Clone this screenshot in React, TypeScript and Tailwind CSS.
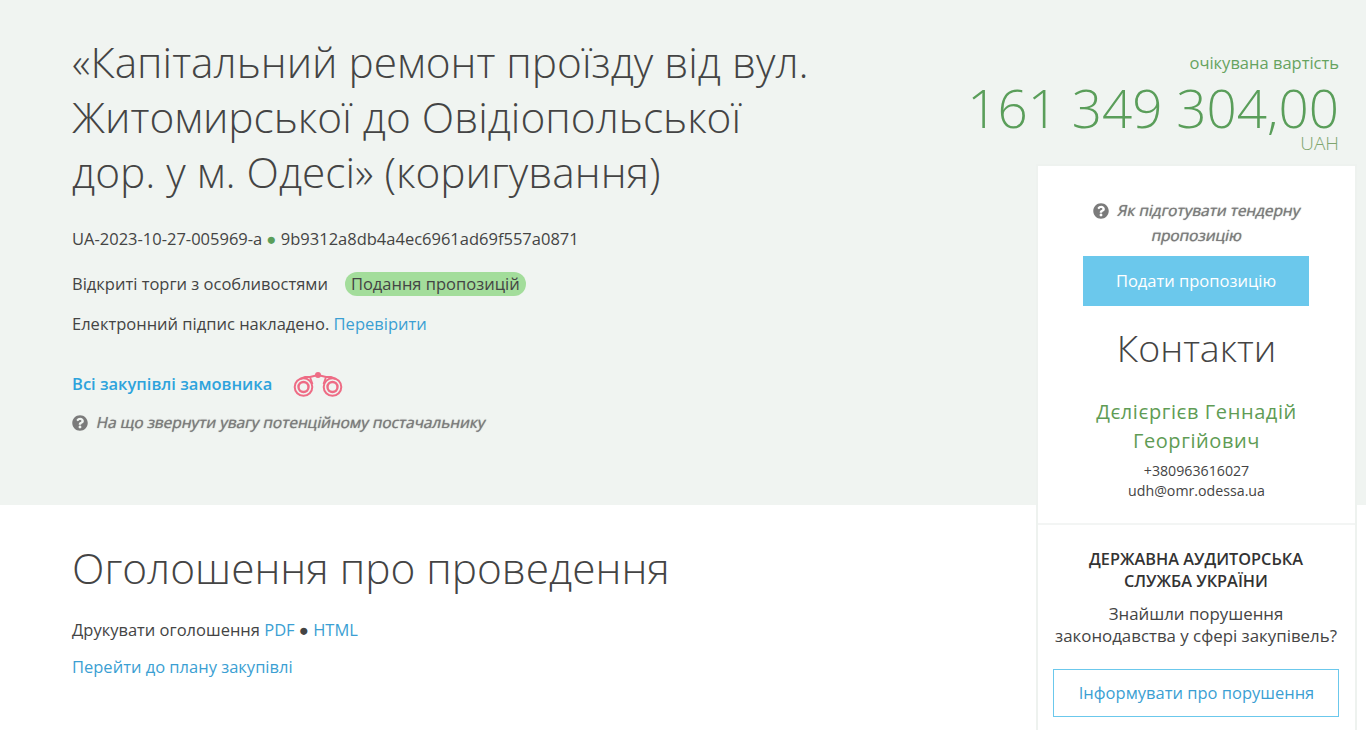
import React from "react";

const font = { fontFamily: '"Open Sans", sans-serif' };

function Help({ className }: { className: string }) {
  return (
    <svg viewBox="0 0 512 512" className={className} fill="#7b7b7b">
      <path d="M504 256c0 137-111 248-248 248S8 393 8 256 119 8 256 8s248 111 248 248zM262.7 90c-54.500 0-89.300 23-116.500 63.800-3.500 5.300-2.300 12.400 2.700 16.300l34.700 26.300c5.200 3.900 12.600 3 16.700-2.100 17.900-22.700 30.100-35.800 57.300-35.800 20.400 0 45.700 13.100 45.700 33 0 15-12.400 22.700-32.600 34-23.600 13.200-54.800 29.700-54.800 70.900V300c0 6.600 5.400 12 12 12h56c6.600 0 12-5.400 12-12v-1.300c0-28.600 83.500-29.800 83.500-107.200C379.400 133.200 319 90 262.700 90zM256 339.500c-25.500 0-46.200 20.700-46.200 46.200 0 25.500 20.700 46.300 46.200 46.300s46.200-20.700 46.200-46.200-20.700-46.300-46.200-46.300z" />
    </svg>
  );
}

function Binoculars() {
  return (
    <svg viewBox="0 0 52 28" className="w-[52px] h-[28px] ml-[20px] mt-[2px]" fill="none" stroke="#ee6c85">
      <circle cx="11.500" cy="16" r="8.800" strokeWidth="2" />
      <circle cx="11.500" cy="16" r="5" strokeWidth="2.400" />
      <circle cx="40.500" cy="16" r="8.800" strokeWidth="2" />
      <circle cx="40.500" cy="16" r="5" strokeWidth="2.400" />
      <path d="M8 8 L13 6 L18 6 L26 4 L34 6 L39 6 L44 8" strokeWidth="2" />
      <path d="M18 6 L20.500 13 M34 6 L31.500 13" strokeWidth="1.800" />
      <circle cx="26" cy="4" r="3" fill="#ee6c85" stroke="none" />
    </svg>
  );
}

export default function App() {
  return (
    <div style={font} className="relative h-[730px] overflow-hidden bg-white text-[#444444] text-[16.5px]">
      <header className="h-[505px] bg-[#f0f4f1] flex justify-between pl-[72px] pr-[27px] pt-[34px]">
        <div className="w-[760px]">
          <h1 className="text-[42.400px] leading-[55px] font-light m-0">
            «Капітальний ремонт проїзду від вул. Житомирської до Овідіопольської дор. у м. Одесі» (коригування)
          </h1>
          <p className="mt-[28px] leading-[24px]">
            UA-2023-10-27-005969-a <span className="text-[#5a9e5a]">●</span> 9b9312a8db4a4ec6961ad69f557a0871
          </p>
          <div className="mt-[20px] flex items-center h-[26px]">
            <span>Відкриті торги з особливостями</span>
            <span className="ml-[17px] rounded-full bg-[#a3dd9b] px-[6px] h-[24px] leading-[24px]">Подання пропозицій</span>
          </div>
          <p className="mt-[15px] leading-[24px]">
            Електронний підпис накладено. <span className="text-[#3b9fd3]">Перевірити</span>
          </p>
          <div className="mt-[35px] flex items-center h-[26px]">
            <span className="font-semibold text-[#2ea3dc]">Всі закупівлі замовника</span>
            <Binoculars />
          </div>
          <div className="mt-[14px] flex items-center h-[24px] text-[15.350px] text-[#7b7b7b] [text-shadow:0_0_1px_#7b7b7b]">
            <Help className="w-[16px] h-[16px] mr-[9px]" />
            <span className="inline-block -skew-x-12">На що звернути увагу потенційному постачальнику</span>
          </div>
        </div>
        <div className="text-right">
          <div className="mt-[17px] leading-[24px] text-[#66a35f]">очікувана вартість</div>
          <div className="text-[53px] leading-[50px] font-light text-[#5a9e5a] mt-[8px]">161 349 304,00</div>
          <div className="text-[19px] leading-[20px] font-light text-[#7fa66f]">UAH</div>
        </div>
      </header>

      <section className="pl-[72px] pt-[35px]">
        <h2 className="text-[42.400px] leading-[55px] font-light">Оголошення про проведення</h2>
        <p className="mt-[23px] leading-[24px]">
          Друкувати оголошення <span className="text-[#3b9fd3]">PDF</span> ● <span className="text-[#3b9fd3]">HTML</span>
        </p>
        <p className="mt-[13px] leading-[24px] text-[#3b9fd3]">Перейти до плану закупівлі</p>
      </section>

      <aside className="absolute left-[1036px] top-[164px] w-[321px] border-2 border-[#eef2ef] bg-white text-center">
        <div className="h-[357px] pt-[32px] flex flex-col items-center">
          <div className="w-[240px] text-[15.350px] text-[#7b7b7b] [text-shadow:0_0_1px_#7b7b7b] leading-[25px]">
            <div className="flex items-center justify-center">
              <Help className="w-[16px] h-[16px] mr-[9px]" />
              <span className="inline-block -skew-x-12">Як підготувати тендерну</span>
            </div>
            <div className="-skew-x-12">пропозицію</div>
          </div>
          <div className="mt-[8px] ml-[-1px] w-[226px] h-[50px] bg-[#6bc8ec] text-white leading-[50px]">Подати пропозицію</div>
          <div className="mt-[14px] text-[37.500px] leading-[56px] font-light">Контакти</div>
          <div className="mt-[21px] w-[260px] text-[20px] leading-[29px] text-[#5f9c55] tracking-[0.58px]">Дєлієргієв Геннадій Георгійович</div>
          <div className="mt-[6px] text-[14.200px] leading-[20px]">+380963616027</div>
          <div className="text-[14.200px] leading-[20px]">udh@omr.odessa.ua</div>
        </div>
        <div className="border-t-2 border-[#f3f5f4] pl-[15px] pr-[16px] pt-[23px] h-[220px]">
          <div className="font-semibold text-[16.300px] leading-[22px] text-[#333333]">
            ДЕРЖАВНА АУДИТОРСЬКА<br />СЛУЖБА УКРАЇНИ
          </div>
          <div className="mt-[11px] text-[16.850px] leading-[22px]">Знайшли порушення законодавства у сфері закупівель?</div>
          <div className="mt-[22px] h-[48px] border border-[#6bc8ec] text-[#3b9fd3] leading-[45px] pl-px">Інформувати про порушення</div>
        </div>
      </aside>
    </div>
  );
}
